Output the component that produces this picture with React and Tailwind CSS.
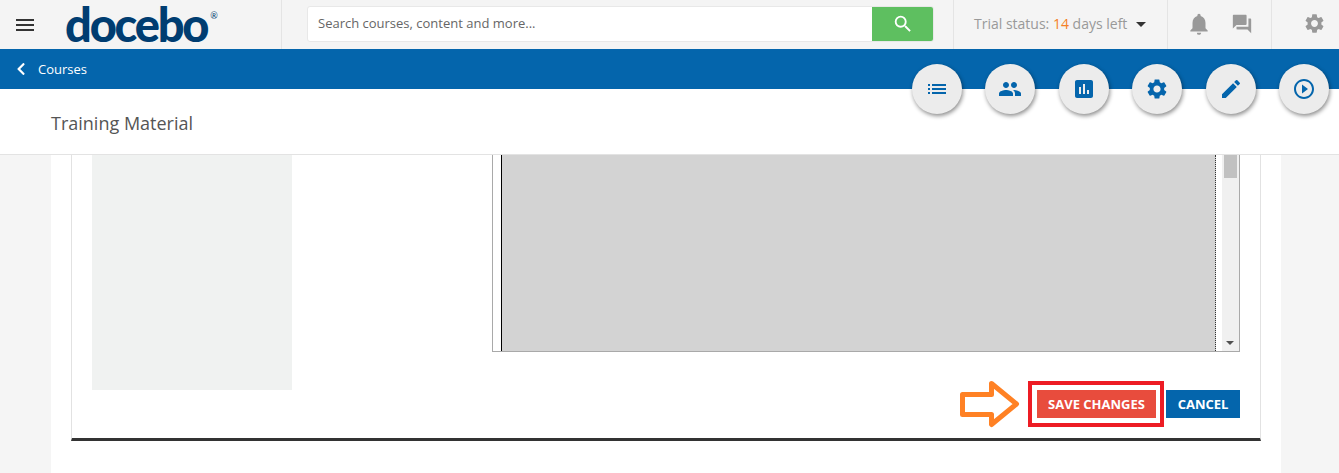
import { MdMenu, MdSearch, MdNotifications, MdForum, MdSettings, MdList, MdPeople, MdAssessment, MdEdit, MdPlayCircleOutline, MdArrowDropDown } from 'react-icons/md'
import { FaChevronLeft } from 'react-icons/fa'

const actions = [MdList, MdPeople, MdAssessment, MdSettings, MdEdit, MdPlayCircleOutline]

const Header = () => (
  <header className="flex h-[49px] items-stretch bg-[#f4f4f4]">
    <div className="flex w-[282px] shrink-0 items-center border-r border-[#e4e4e4]">
      <MdMenu className="ml-[13px] text-[24px] text-[#333]" />
      <div className="ml-[28px] flex items-start text-[#003d71] font-['Lato',sans-serif]">
        <span className="pr-[3px] text-[47px] font-black leading-[49px] tracking-[-2.2px]">docebo</span>
        <span className="mt-[1px] text-[9px] leading-[30px]">®</span>
      </div>
    </div>
    <div className="flex w-[672px] shrink-0 items-center border-r border-[#e4e4e4] pb-px pl-[25px] pr-[19px]">
      <div className="flex h-[36px] flex-1 overflow-hidden rounded-[3px] border border-[#e8e8e8] bg-white">
        <span className="flex flex-1 items-center pl-[10px] text-[13px] text-[#666]">Search courses, content and more...</span>
        <span className="flex w-[61px] items-center justify-center bg-[#5ebf60]">
          <MdSearch className="text-[22px] text-white" />
        </span>
      </div>
    </div>
    <div className="flex w-[214px] shrink-0 items-center border-r border-[#e4e4e4] pb-[2px] pl-[20px] text-[14px] text-[#999]">
      <span>Trial status: <span className="text-[#f58025]">14</span> days left</span>
      <MdArrowDropDown className="ml-[2px] text-[24px] text-[#333]" />
    </div>
    <div className="flex w-[104px] shrink-0 items-center gap-[19px] border-r border-[#e4e4e4] pb-[2px] pl-[18px] text-[#999]">
      <MdNotifications className="text-[26px]" />
      <MdForum className="text-[22px]" />
    </div>
    <div className="flex flex-1 items-center pb-[2px] pl-[31px] text-[#999]">
      <MdSettings className="text-[23px]" />
    </div>
  </header>
)

const Editor = () => (
  <div className="flex h-[197px] border border-t-0 border-[#a9a9a9] bg-white">
    <div className="w-[8px] shrink-0" />
    <div className="flex-1 border-l border-r border-dotted border-l-black border-r-[#333] bg-[#d3d3d3] [border-left-style:solid]" />
    <div className="w-[6px] shrink-0" />
    <div className="relative flex w-[17px] shrink-0 flex-col bg-[#f0f0f0]">
      <div className="mx-[2px] h-[23px] bg-[#c1c1c1]" />
      <div className="absolute bottom-[6px] left-[4px] h-0 w-0 border-x-[4px] border-t-[4px] border-x-transparent border-t-[#505050]" />
    </div>
  </div>
)

const Arrow = () => (
  <svg width="60" height="48" viewBox="0 0 60 48" className="mr-[8px] shrink-0">
    <path d="M2.5 14.5H31.5V3.5L56.5 24L31.5 44.5V34.5H2.5Z" fill="white" stroke="#ff8124" strokeWidth="5" strokeLinejoin="round" />
  </svg>
)

export default function App() {
  return (
    <div className="relative h-[473px] overflow-hidden bg-[#f5f5f5] font-['Open_Sans',sans-serif]">
      <Header />
      <div className="flex h-[40px] items-center bg-[#0465ac] text-white">
        <FaChevronLeft className="ml-[14px] text-[14px]" />
        <span className="ml-[10px] pt-px text-[13px]">Courses</span>
      </div>
      <div className="flex h-[66px] items-center border-b border-[#e3e3e3] bg-white pl-[51px] pt-[3px] text-[18px] text-[#555]">
        Training Material
      </div>
      {/* floating course actions */}
      <div className="absolute right-[10px] top-[64px] flex gap-[23.4px]">
        {actions.map((Icon, i) => (
          <div key={i} className="flex h-[50px] w-[50px] items-center justify-center rounded-full bg-[#ececec] text-[#0465ac] shadow-[1px_2px_4px_rgba(0,0,0,0.45)]">
            <Icon className="text-[24px]" />
          </div>
        ))}
      </div>
      <main className="ml-[51px] mr-[58px] h-[318px] bg-white px-[20px]">
        <div className="flex h-[286px] border-x border-b-[3px] border-x-[#e2e2e2] border-b-[#333] pl-[20px] pr-[20px]">
          <div className="h-[235px] w-[200px] shrink-0 bg-[#f0f2f1]" />
          <div className="ml-[200px] flex-1">
            <Editor />
            <div className="mt-[28px] flex items-center justify-end">
              <Arrow />
              <div className="mr-[2px] border-4 border-[#ed1c24] pb-[5px] pl-[5px] pr-[4px] pt-[5px]">
                <button className="block h-[28px] w-[119px] bg-[#e84c3d] pt-px text-[13px] font-bold text-white">SAVE CHANGES</button>
              </div>
              <button className="h-[28px] w-[74px] bg-[#0465ac] pt-px text-[13px] font-bold text-white">CANCEL</button>
            </div>
          </div>
        </div>
      </main>
    </div>
  )
}
